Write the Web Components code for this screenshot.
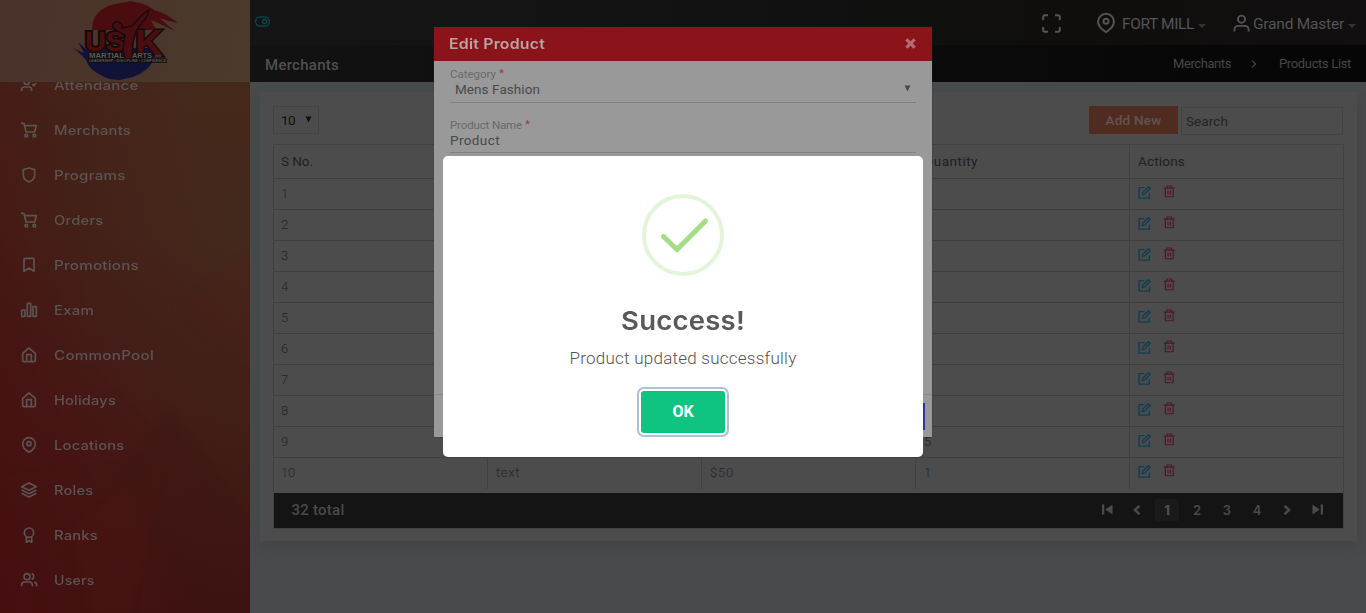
<!DOCTYPE html>
<html lang="en"><head><meta charset="utf-8"><title>Products List</title>
<style>
html,body{margin:0;width:1366px;height:613px;overflow:hidden;background:#484b4c}
body{font-family:Roboto,"Liberation Sans",sans-serif;position:relative}
</style></head><body>
<app-shell></app-shell>
<edit-dialog></edit-dialog>
<success-alert></success-alert>
<script>
function define(name, html, setup) {
  customElements.define(name, class extends HTMLElement {
    constructor() {
      super();
      const t = document.createElement('template');
      t.innerHTML = typeof html === 'function' ? html(this) : html;
      this.attachShadow({mode: 'open'}).append(t.content.cloneNode(true));
    }
    connectedCallback() { if (setup) setup(this); }
  });
}

const ICONS = {
  attendance: '<path d="M16 21v-2a4 4 0 0 0-4-4H5a4 4 0 0 0-4 4v2"/><circle cx="8.5" cy="7" r="4"/><path d="M17 11l2 2 4-4"/>',
  cart: '<circle cx="8" cy="20.5" r="2"/><circle cx="20" cy="20.5" r="2"/><path d="M0 2h4.500l3 13h13L23 5.500H6"/>',
  shield: '<path d="M12 22.500s8.500-3.500 8.500-10V4L12 1.500 3.500 4v8.500c0 6.500 8.500 10 8.500 10z"/>',
  bookmark: '<path d="M19.500 21.500l-7.500-5-7.500 5V4a2 2 0 0 1 2-2h11a2 2 0 0 1 2 2z"/>',
  bars: '<path d="M1 12h5v9.500H1zM9.500 2h5v19.500h-5zM18 7h5v14.500h-5z"/>',
  home: '<path d="M2.500 9.500L12 1.500l9.500 8V20a2 2 0 0 1-2 2h-15a2 2 0 0 1-2-2z"/><path d="M8.500 22V11.500h7V22"/>',
  pin: '<path d="M21.500 10.500c0 7-9.500 12.500-9.500 12.500S2.500 17.500 2.500 10.500a9.500 9.500 0 0 1 19 0z"/><circle cx="12" cy="10" r="3"/>',
  layers: '<path d="M12 1.500L1 7l11 5.500L23 7zM1 17l11 5.500L23 17M1 12l11 5.500L23 12"/>',
  award: '<circle cx="12" cy="8.500" r="7"/><path d="M8 14.500V23l4-2.500 4 2.500v-8.500"/>',
  users: '<path d="M17 21.500v-2a4.500 4.500 0 0 0-4.500-4.500h-7A4.500 4.500 0 0 0 1 19.500v2M23.500 21.500v-2a4.500 4.500 0 0 0-3.500-4.300M16 2.500a4.500 4.500 0 0 1 0 8.600"/><circle cx="9" cy="7" r="4.500"/>',
  user: '<path d="M21 22v-2a5 5 0 0 0-5-5H8a5 5 0 0 0-5 5v2"/><circle cx="12" cy="6.500" r="4.500"/>',
  expand: '<path d="M8 2.500H4.500a2 2 0 0 0-2 2V8M21.500 8V4.500a2 2 0 0 0-2-2H16M16 21.500h3.500a2 2 0 0 0 2-2V16M2.500 16v3.500a2 2 0 0 0 2 2H8"/>',
  toggle: '<rect x="1" y="4.500" width="22" height="15" rx="7.500"/><circle cx="15.500" cy="12" r="3.500"/>',
  edit: '<path d="M12 3H2v19.500h19V14M8 16l1-5L19.500 1.500l3 3L12 15z"/>',
  trash: '<path d="M1.500 6h21M4.500 6v16.500h15V6M7.500 6V2h9v4M9.700 11v7M14.300 11v7"/>',
  close: '<path d="M3 3l18 18M21 3L3 21"/>',
  caret: '<path d="M0 6h24L12 18z" fill="currentColor" stroke="none"/>',
  tri: '<path d="M2 2h20L12 22z" fill="currentColor" stroke="none"/>',
  first: '<path d="M2.500 1v22" stroke-width="5"/><path d="M23 1v22L7 12z" fill="currentColor" stroke="none"/>',
  last: '<path d="M21.500 1v22" stroke-width="5"/><path d="M1 1v22l16-11z" fill="currentColor" stroke="none"/>',
  prev: '<path d="M18 2L7 12l11 10"/>',
  next: '<path d="M6 2l11 10L6 22"/>'
};
define('ui-icon', el => `<style>:host{display:block;flex:none}svg{display:block;overflow:visible}</style><svg viewBox="0 0 24 24" fill="none" stroke="currentColor" stroke-linecap="butt" stroke-linejoin="round"></svg>`, el => {
  const s = el.shadowRoot.querySelector('svg');
  s.setAttribute('width', el.getAttribute('size'));
  s.setAttribute('height', el.getAttribute('size'));
  s.setAttribute('stroke-width', el.getAttribute('stroke') || 2);
  s.innerHTML = ICONS[el.getAttribute('name')];
});

define('ui-label', '<style>:host{display:block;flex:none;white-space:nowrap}span{display:inline-block;transform-origin:0 50%}:host([wide]) span{letter-spacing:.2px}</style><span></span>', el => {
  const s = el.shadowRoot.querySelector('span');
  s.textContent = el.getAttribute('text');
  const w = +el.getAttribute('w');
  if (!w) return;
  el.style.width = w + 'px';
  const natural = s.getBoundingClientRect().width;
  if (el.hasAttribute('wide')) s.style.transform = `scaleX(${w / natural})`;
  else s.style.letterSpacing = (w - natural) / s.textContent.length + 'px';
});

define('brand-logo', `<style>:host{display:block;width:106px;height:82px}svg{display:block;overflow:visible}text{font-family:"Liberation Sans",sans-serif;font-weight:700}</style>
<svg width="106" height="82" viewBox="0 0 106 82">
<path d="M20 34C16 15 30 5 48 3l10-2 8 2c8 1 14 6 18 10l21 10-9-2-10-3 16 13-17-8-7-3 5 10H20z" fill="#4b0c0f"/>
<path d="M71 9c14 0 24 6 34 14-12-6-22-10-32-9z" fill="#4b0c0f"/>
<path d="M5 42l18 16 3-5-14-11 16 6h55c0 14-9 24-23 29l-14 3-9-1c-12-4-21-10-24-19C9 55 3 50 0 48l11 5z" fill="#101238"/>
<g fill="#4e0c0f" stroke="#140c0b" stroke-width="3" paint-order="stroke">
<text x="12" y="51" font-size="28" textLength="40" lengthAdjust="spacingAndGlyphs" stroke-width="4">US</text><text x="62" y="56" font-size="36" textLength="28" lengthAdjust="spacingAndGlyphs">K</text></g>
<path d="M43 30c-5-2-4-8 1-8 4 0 6 3 5 6l10-2L70 14l6-4-2 6-11 15-3 12-1 16-7 1-2-11 2-14-6-3z" fill="#4b0c0f" stroke="#140d0d" stroke-width="1.500"/>
<g fill="#5c5858" stroke="#110d0d" stroke-width="1.500" paint-order="stroke">
<text x="16" y="58" font-size="7" textLength="35" lengthAdjust="spacingAndGlyphs">MARTIAL</text><text x="59" y="58" font-size="7" textLength="20" lengthAdjust="spacingAndGlyphs">ARTS</text>
<path d="M82 56h6" stroke="#545050" stroke-width="1"/>
<text x="16" y="62" font-size="3.500" textLength="77" lengthAdjust="spacingAndGlyphs">LEADERSHIP • DISCIPLINE • CONFIDENCE</text></g>
</svg>`);

const MENU = [['attendance','Attendance',84.5],['cart','Merchants',77],['shield','Programs',71.5],['cart','Orders',49.5],['bookmark','Promotions',85],['bars','Exam',40],['home','CommonPool',100],['home','Holidays',62],['pin','Locations',70.5],['layers','Roles',39.5],['award','Ranks',44],['users','Users',40.5]];
define('side-bar', `<style>
:host{display:block;position:relative;width:250px;height:613px;overflow:hidden;background:linear-gradient(75deg,rgba(72,13,16,.9),rgba(70,17,18,.35) 45%,transparent 80%),linear-gradient(180deg,#45291b 0%,#43291b 38%,#42201a 65%,#3b1411 100%)}
.art{position:absolute;inset:0;filter:blur(3px)}
nav{position:relative;padding-top:63px}
.item{display:flex;align-items:center;height:45px;padding-left:21px;gap:17px;color:#5b5452;font:500 12.800px Inter,sans-serif;box-sizing:border-box;padding-bottom:1px}
.brand{position:absolute;top:0;left:0;width:250px;height:82px;background:linear-gradient(100deg,#4b322b,#4a362b 55%,#4a3b2c);padding-left:73px;box-sizing:border-box}
</style>
<svg class="art" width="250" height="613"><g fill="#5a1b16" opacity=".16"><path d="M250 250L175 310l75 55z"/><path d="M165 462L70 530 90 613h40z"/><path d="M0 350l90 20 80 80L0 470z" opacity=".5"/></g><path d="M180 613L120 470l50-60 80 120v83z" fill="#301010" opacity=".12"/></svg>
<nav>${MENU.map(m => `<div class="item"><ui-icon name="${m[0]}" size="16" stroke="2.500"></ui-icon><ui-label wide text="${m[1]}" w="${m[2]}"></ui-label></div>`).join('')}</nav>
<div class="brand"><brand-logo></brand-logo></div>`);

define('top-bar', `<style>
:host{display:block;height:82px;color:#545454}
.a{height:45px;display:flex;align-items:center;padding:0 10px 0 5px;background:linear-gradient(90deg,#151515,#121212 40%,#0f0e0d 75%,#110f0f);font-size:15.500px;font-weight:400;box-sizing:border-box}
.b{height:37px;display:flex;align-items:center;padding:0 15px 0 15px;background:linear-gradient(90deg,#121212,#0d0d0d 50%,#090808 80%,#070606);font-size:13px;font-weight:400;color:#464646;box-sizing:border-box}
.t{font-size:15px;font-weight:500;color:#505050;margin:2px auto 0 0}
.tog{color:#0d4a52;margin:-3px auto 0 0}
</style>
<div class="a"><ui-icon class="tog" name="toggle" size="15" stroke="2"></ui-icon>
<ui-icon name="expand" size="21" stroke="2.300" style="margin:2px 34px 0 0"></ui-icon><ui-icon name="pin" size="20" stroke="2.400" style="margin-right:6px"></ui-icon><ui-label text="FORT MILL" w="72" style="margin:2px 4px 0 0"></ui-label><ui-icon name="caret" size="8" style="margin:6px 26px 0 0;color:#343434"></ui-icon>
<ui-icon name="user" size="19" stroke="2.400" style="margin:1px 2px 0 0"></ui-icon><ui-label text="Grand Master" w="91" style="margin:2px 4px 0 0"></ui-label><ui-icon name="caret" size="8" style="margin:6px 0 0 0;color:#343434"></ui-icon></div>
<div class="b"><ui-label class="t" text="Merchants" w="74"></ui-label><ui-label text="Merchants" w="58"></ui-label><ui-icon name="next" size="8" stroke="3.200" style="margin:0 19px 0 19px"></ui-icon><ui-label text="Products List" w="72" style="margin-left:2px"></ui-label></div>`);

const rows = Array.from({length: 10}, (_, i) => [i + 1, i === 9 ? 'text' : '', i === 9 ? '$50' : '', i === 9 ? '1' : i === 8 ? '5' : '']);
define('product-table', `<style>
:host{display:block;width:1071px;height:385px;box-sizing:border-box;border:1px solid #414141;color:#222428;font-size:13px;font-weight:300}
.r{display:grid;grid-template-columns:214px 214px 214px 214px 1fr;height:31px;box-sizing:border-box;border-bottom:1px solid #3f3f3f}
.r.h{height:34px;font-weight:400;color:#1e2023;font-size:13.500px}
.r>div{display:flex;align-items:center;padding:0 0 2px 7px;border-right:1px solid #414141}
.r>div+div{padding-left:8px}
.r>div:last-child{border:0}
.r.h>div{padding-bottom:1px}
.r.z{border-bottom:0}
.r.z>div{padding-bottom:3px}
.ed{color:#113c52;margin:-2px 12px 0 0}.tr{color:#501529;margin-top:-3px}
footer{margin-top:4px;height:35px;background:#141414;display:flex;align-items:center;padding:0 14px 2px 17.500px;box-sizing:border-box;color:#4a4a4a;font-size:15px;font-weight:500}
.p{margin-left:auto;display:grid;grid-template-columns:repeat(8,24px);column-gap:6px;font-size:13px;font-weight:600;font-family:Inter,sans-serif}
.p>*{display:flex;height:22px;align-items:center;justify-content:center}
.on{background:#1a1a1a;border-radius:2px;font-weight:800;color:#505050}
</style>
<div class="r h"><div><ui-label text="S No." w="32"></ui-label></div><div></div><div></div><div><ui-label text="Quantity" w="54"></ui-label></div><div><ui-label text="Actions" w="47"></ui-label></div></div>
${rows.map((r, i) => `<div class="r ${i === 9 ? 'z' : ''}"><div>${i === 9 ? '<ui-label text="10" w="14"></ui-label>' : r[0]}</div><div>${r[1] ? '<ui-label text="text" w="24"></ui-label>' : ''}</div><div>${r[2] ? '<ui-label text="$50" w="24"></ui-label>' : ''}</div><div>${r[3]}</div><div><ui-icon class="ed" name="edit" size="13" stroke="2.500"></ui-icon><ui-icon class="tr" name="trash" size="12.500" stroke="2.200"></ui-icon></div></div>`).join('')}
<footer><ui-label text="32 total" w="53"></ui-label><div class="p"><span><ui-icon name="first" size="11"></ui-icon></span><span><ui-icon name="prev" size="10" stroke="6"></ui-icon></span><span class="on">1</span><span>2</span><span>3</span><span>4</span><span><ui-icon name="next" size="10" stroke="6"></ui-icon></span><span><ui-icon name="last" size="11"></ui-icon></span></div></footer>`);

define('products-card', `<style>
:host{display:block;width:1097px;height:449px;margin:10px 0 0 10px;padding:14px 13px 0;box-sizing:border-box;background:#4c4c4c;box-shadow:0 6px 12px rgba(45,45,45,.22)}
.tools{display:flex;height:28px;margin:0 1px 10px 0;font-size:13.500px;color:#242424}
.sel{width:46px;box-sizing:border-box;border:1px solid #434343;display:flex;align-items:center;padding:0 6px 1px 7px;justify-content:space-between;color:#101010}
.add{width:89px;height:28px;margin:0 3px 0 auto;background:#4f2c1f;color:#61544f;font-weight:500;display:flex;align-items:center;justify-content:center}
.search{width:162px;height:28px;margin-top:1px;border:1px solid #434343;box-sizing:border-box;display:flex;align-items:center;padding-left:4px}
</style><div class="tools"><div class="sel"><ui-label text="10" w="14"></ui-label><ui-icon name="tri" size="7"></ui-icon></div><div class="add"><ui-label text="Add New" w="56"></ui-label></div><div class="search"><ui-label text="Search" w="42"></ui-label></div></div><product-table></product-table>`);

define('app-shell', `<style>:host{display:flex;width:1366px;height:613px}main{flex:1;min-width:0;background:#484b4c}</style><side-bar></side-bar><main><top-bar></top-bar><products-card></products-card></main>`);

define('form-field', el => `<style>:host{display:block;box-sizing:border-box;border-bottom:1px solid #808080;color:#6a6a6a;font-size:11.500px}.l{display:flex;height:13px;gap:3px}.l b{color:#a0363c;font-weight:400;margin-top:-1px}.v{display:flex;align-items:center;height:17px;justify-content:space-between;color:#484a4c;font-size:13.500px}</style><div class="l"><slot name="label"></slot><b>*</b></div><div class="v"><slot></slot></div>`);
define('edit-dialog', `<style>
:host{position:absolute;left:434px;top:27px;width:498px;height:410px;background:#999;box-shadow:0 0 1px #333;display:flex;flex-direction:column}
header{height:33px;background:#8b131a;display:flex;align-items:center;justify-content:space-between;padding:0 16px 0 15px;color:#b5a6a8;font:600 14.500px Inter,sans-serif;border-bottom:1px solid #8b131a}
.body{padding:6px 16px 0;flex:1}
form-field{height:36px;margin-bottom:15px}form-field+form-field{height:35px}
.foot{height:43px;border-top:1px solid #898989;display:flex;justify-content:flex-end;padding:8px 7px;box-sizing:border-box}
.save{width:74px;height:27px;background:#2c369a}
</style><header><ui-label wide text="Edit Product" w="96"></ui-label><ui-icon name="close" size="11" stroke="7" style="color:#b46b70"></ui-icon></header>
<div class="body"><form-field><ui-label slot="label" text="Category" w="46"></ui-label><ui-label text="Mens Fashion" w="85" style="margin-left:5px"></ui-label><ui-icon name="tri" size="7" style="margin-right:5px"></ui-icon></form-field>
<form-field><ui-label slot="label" text="Product Name" w="72"></ui-label><ui-label text="Product" w="50"></ui-label></form-field></div><div class="foot"><div class="save"></div></div>`);

define('success-alert', `<style>
:host{position:absolute;left:443px;top:156px;width:480px;height:301px;background:#fff;border-radius:5px;display:flex;flex-direction:column;align-items:center}
.ring{margin-top:38px;display:block}
.title{margin-top:26px;height:38px;line-height:38px;font-family:Inter,sans-serif;font-weight:600;font-size:26px;color:#595959}
.msg{margin-top:6px;height:24px;line-height:24px;font-size:17px;font-weight:300;color:#545454}
button{all:unset;margin-top:21px;width:84px;height:42px;border-radius:3px;background:#0fc380;box-shadow:0 0 0 2px #fff,0 0 0 4px #adc1d5;color:#fff;font-weight:700;font-size:16px;display:flex;align-items:center;justify-content:center;padding-bottom:1px;box-sizing:border-box}
</style><svg class="ring" width="82" height="82"><circle cx="41" cy="41" r="39" fill="none" stroke="#e4f4db" stroke-width="4"/><path d="M21.500 42.500L35 55.500 63.500 27" fill="none" stroke="#a5dc86" stroke-width="5" stroke-linecap="round"/></svg>
<ui-label wide class="title" text="Success!" w="124"></ui-label><ui-label class="msg" text="Product updated successfully" w="227"></ui-label><button><ui-label text="OK" w="21"></ui-label></button>`);
</script></body></html>
